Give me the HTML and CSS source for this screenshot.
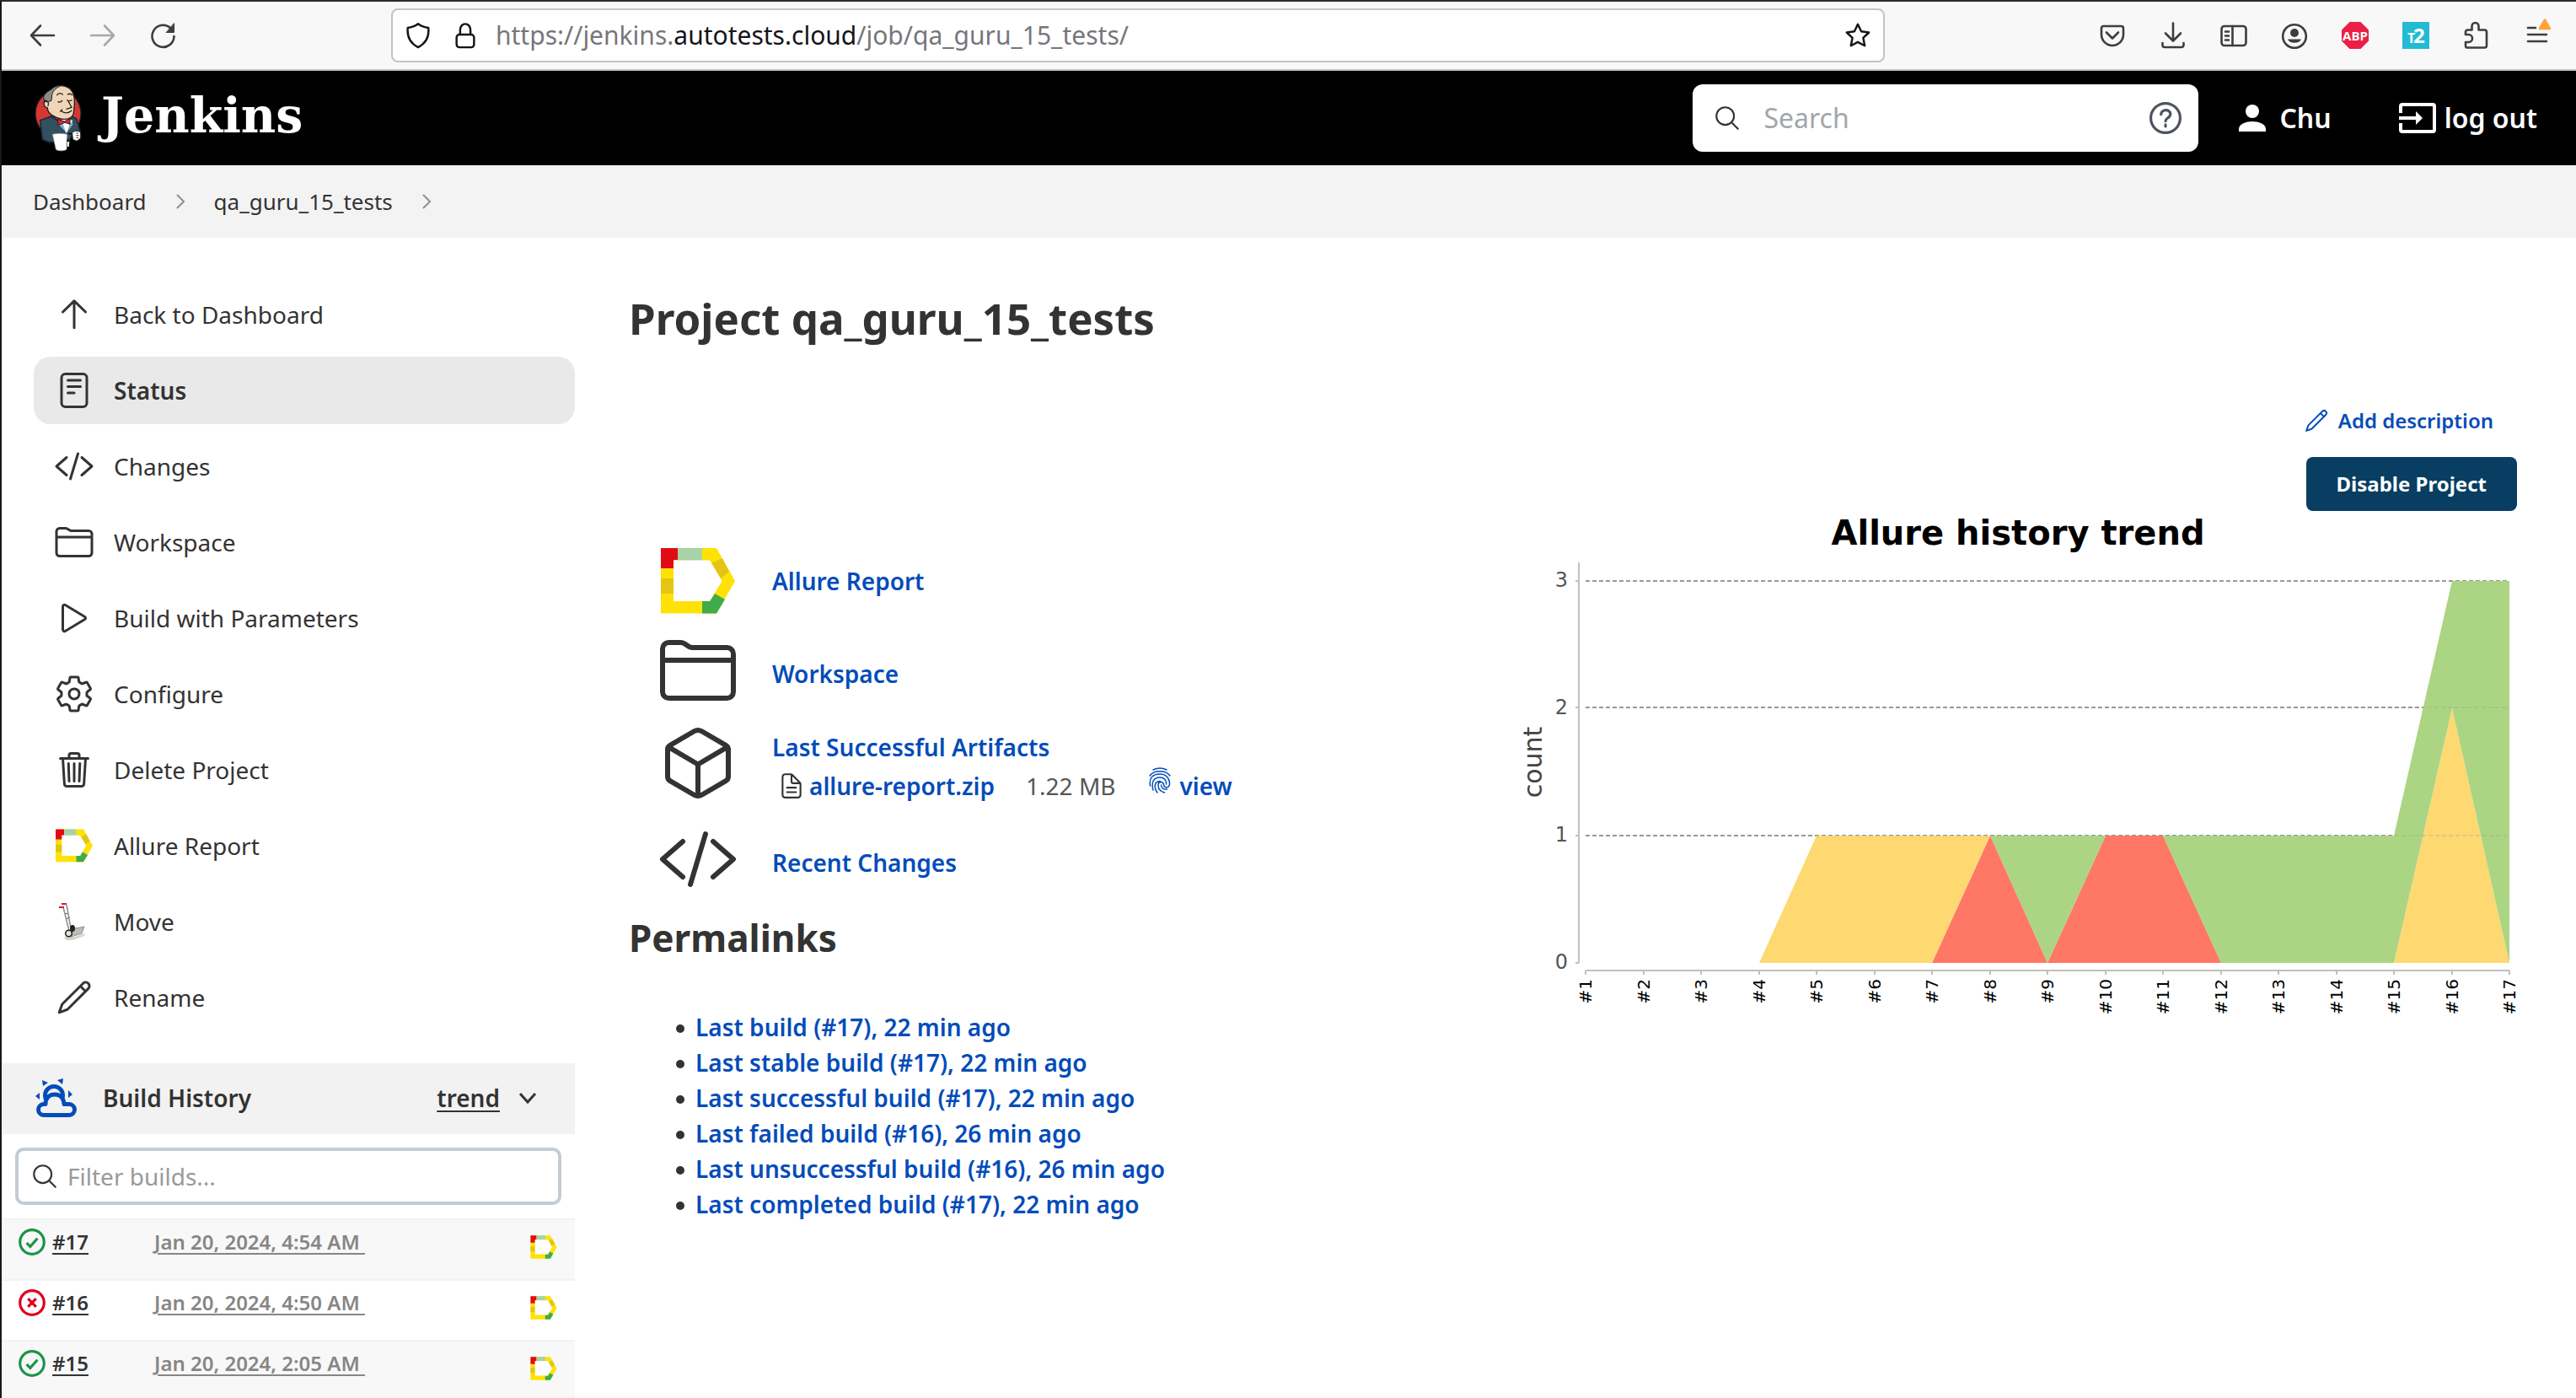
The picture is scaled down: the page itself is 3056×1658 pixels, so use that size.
FILE: index.html
```html
<!DOCTYPE html>
<html lang="en">
<head>
<meta charset="utf-8">
<title>qa_guru_15_tests [Jenkins]</title>
<link rel="stylesheet" href="styles.css">
</head>
<body>
<svg class="sprite" aria-hidden="true">
  <symbol id="i-up" viewBox="0 0 512 512"><path d="M112 224L256 84l144 140M256 90v334"/></symbol>
  <symbol id="i-status" viewBox="0 0 512 512"><rect x="96" y="48" width="320" height="416" rx="48"/><path d="M176 128h160M176 208h160M176 288h80"/></symbol>
  <symbol id="i-code" viewBox="0 0 512 512"><path d="M160 368L32 256l128-112M352 368l128-112-128-112M304 96l-96 320"/></symbol>
  <symbol id="i-folder" viewBox="0 0 512 512"><path d="M440 432H72a40 40 0 01-40-40V120a40 40 0 0140-40h75.89a40 40 0 0122.19 6.72l27.84 18.56a40 40 0 0022.19 6.72H440a40 40 0 0140 40v240a40 40 0 01-40 40zM32 192h448"/></symbol>
  <symbol id="i-play" viewBox="0 0 512 512"><path d="M112 111v290c0 17.44 17 28.52 31 20.16l247.9-148.37c12.12-7.25 12.12-26.33 0-33.58L143 90.84c-14-8.36-31 2.72-31 20.16z"/></symbol>
  <symbol id="i-gear" viewBox="0 0 512 512"><path d="M262.29 192.31a64 64 0 1057.4 57.4 64.13 64.13 0 00-57.4-57.4zM416.39 256a154.34 154.34 0 01-1.53 20.79l45.21 35.46a10.81 10.81 0 012.45 13.75l-42.77 74a10.81 10.81 0 01-13.14 4.59l-44.9-18.08a16.11 16.11 0 00-15.17 1.75A164.48 164.48 0 01325 400.8a15.94 15.94 0 00-8.82 12.14l-6.73 47.89a11.08 11.08 0 01-10.68 9.17h-85.54a11.11 11.11 0 01-10.69-8.87l-6.72-47.82a16.07 16.07 0 00-9-12.22 155.3 155.3 0 01-21.46-12.57 16 16 0 00-15.11-1.71l-44.89 18.07a10.81 10.81 0 01-13.14-4.58l-42.77-74a10.8 10.8 0 012.45-13.75l38.21-30a16.05 16.05 0 006-14.08c-.36-4.17-.58-8.33-.58-12.5s.21-8.27.58-12.35a16 16 0 00-6.07-13.94l-38.19-30A10.81 10.81 0 0149.48 186l42.77-74a10.81 10.81 0 0113.14-4.59l44.9 18.08a16.11 16.11 0 0015.17-1.75A164.48 164.48 0 01187 111.2a15.94 15.94 0 008.82-12.14l6.73-47.89A11.08 11.08 0 01213.23 42h85.54a11.11 11.11 0 0110.69 8.87l6.72 47.82a16.07 16.07 0 009 12.22 155.3 155.3 0 0121.46 12.57 16 16 0 0015.11 1.71l44.89-18.07a10.81 10.81 0 0113.14 4.58l42.77 74a10.8 10.8 0 01-2.45 13.75l-38.21 30a16.05 16.05 0 00-6.05 14.08c.33 4.14.55 8.3.55 12.47z"/></symbol>
  <symbol id="i-trash" viewBox="0 0 512 512"><path d="M112 112l20 320c.95 18.49 14.4 32 32 32h184c17.67 0 30.87-13.51 32-32l20-320M80 112h352M192 112V72a24 24 0 0124-24h80a24 24 0 0124 24v40M256 176v224M184 176l8 224M328 176l-8 224"/></symbol>
  <symbol id="i-pencil" viewBox="0 0 512 512"><path d="M66 446l38-104L372 74a47 47 0 0166 66L170 408zM334 112l66 66"/></symbol>
  <symbol id="i-cube" viewBox="0 0 512 512"><path d="M448 341.37V170.61A32 32 0 00432.11 143l-152-88.46a47.94 47.94 0 00-48.24 0L79.89 143A32 32 0 0064 170.61v170.76A32 32 0 0079.89 369l152 88.46a48 48 0 0048.24 0l152-88.46A32 32 0 00448 341.37zM69 153.99l187 110 187-110M256 463.99v-200"/></symbol>
  <symbol id="i-doc" viewBox="0 0 512 512"><path d="M416 221.25V416a48 48 0 01-48 48H144a48 48 0 01-48-48V96a48 48 0 0148-48h98.75a32 32 0 0122.62 9.37l141.26 141.26a32 32 0 019.37 22.62zM256 56v120a32 32 0 0032 32h120M176 288h160M176 368h160"/></symbol>
  <symbol id="i-search" viewBox="0 0 512 512"><path d="M221.09 64a157.09 157.09 0 10157.09 157.09A157.1 157.1 0 00221.09 64zM338.29 338.29L448 448"/></symbol>
  <symbol id="i-right" viewBox="0 0 12 20"><path d="M2 2l8 8-8 8"/></symbol>
  <symbol id="i-down" viewBox="0 0 24 16"><path d="M3 3l9 10 9-10"/></symbol>
  <symbol id="i-finger" viewBox="0 0 28 32"><path d="M6 3c5-2.500 11-2.500 16 0M2 10C7 3 21 3 26 10M2.500 22C1 13 5 8 14 8c8 0 12 6 11.500 12-.5 5-6.500 5-7 .5-.5-4-6.500-4-6.500.5 0 4.500 3 8 7.500 9M6 27C3.500 18 6.500 12 14 12c5.500 0 8 4 7.500 8M11 30C7 25 6.500 16.500 14.500 16.500M15.500 21c.5 4 3 5.500 7 5"/></symbol>
  <symbol id="i-ok" viewBox="0 0 30 30"><circle cx="15" cy="15" r="13.400"/><path class="bold" d="M9 16l4 4 8-9"/></symbol>
  <symbol id="i-fail" viewBox="0 0 30 30"><circle cx="15" cy="15" r="13.400"/><path class="bold" d="M10.500 10.500l9 9M19.500 10.500l-9 9"/></symbol>
  <symbol id="i-allure" viewBox="-4 -9 96 96">
    <path fill="#ffe106" d="M0 0h66l22 39-22 38.500H0z"/>
    <path fill="#e10b15" d="M0 0h20v14H0zM0 0h15v24H0z"/>
    <path fill="#a8d3a6" d="M20 0h29v15H20z"/>
    <path fill="#e3c513" d="M73 12l8 16-10 8-11-18zM0 36h15v18H0z"/>
    <path fill="#3fac49" d="M49 63h9l6-9 12 7-10 16.500H49z"/>
    <path fill="#fff" d="M15 14.500h43L72.500 39 58 63H15z"/>
  </symbol>
</svg>

<nav class="toolbar" aria-label="Browser">
  <button class="tool" aria-label="Back"><svg viewBox="0 0 32 32"><path d="M30 16H3M14 4.500L3 16l11 11.500"/></svg></button>
  <button class="tool tool-off" aria-label="Forward"><svg viewBox="0 0 32 32"><path d="M2 16h27M18 4.500L29 16 18 27.500"/></svg></button>
  <button class="tool" aria-label="Reload"><svg viewBox="0 0 32 32"><path d="M28.500 17A13 13 0 1 1 24 7"/><path class="solid" d="M28.500 2v10.500h-9z"/></svg></button>
  <div class="urlbar">
    <svg viewBox="0 0 32 34"><path d="M16 2.500c4 3 8 4.500 13 5 1 10-2 19-13 24.500C5 26.500 2 17.500 3 7.500c5-.5 9-2 13-5z"/></svg>
    <svg viewBox="0 0 32 34"><rect x="5" y="16" width="22" height="16" rx="3.500"/><path d="M9.500 16v-6a6.500 7.500 0 0 1 13 0v6"/></svg>
    <div class="url" role="textbox" aria-label="Address" contenteditable="true">https://jenkins.<span class="host">autotests.cloud</span>/job/qa_guru_15_tests/</div>
    <button class="tool" aria-label="Bookmark"><svg viewBox="0 0 34 34"><path d="M17 3l4.300 9 9.700 1.300-7.200 6.700L25.700 30 17 25.300 8.300 30l1.900-10L3 13.300 12.700 12z"/></svg></button>
  </div>
  <button class="tool" aria-label="Pocket"><svg viewBox="0 0 32 32"><path d="M5.500 5h21A2.500 2.500 0 0 1 29 7.500V15a13 13 0 0 1-26 0V7.500A2.500 2.500 0 0 1 5.500 5zM9 12.500l7 7 7-7"/></svg></button>
  <button class="tool" aria-label="Downloads"><svg viewBox="0 0 32 32"><path d="M16 1.500V22M7 13.500l9 9 9-9M3.500 25v2.500a2.500 2.500 0 0 0 2.500 2.500h20a2.500 2.500 0 0 0 2.500-2.500V25"/></svg></button>
  <button class="tool" aria-label="Sidebar"><svg viewBox="0 0 32 32"><rect x="1.500" y="5" width="29" height="23" rx="3.500"/><path d="M14.500 5v23M6 11.500h4M6 16.500h4M6 21.500h4"/></svg></button>
  <button class="tool" aria-label="Account"><svg viewBox="0 0 32 32"><circle cx="16" cy="17" r="13.800"/><circle class="fill" cx="16" cy="13" r="5"/><path class="fill" d="M8 20.500h16a8.500 6.500 0 0 1-16 0z"/></svg></button>
  <button class="tool" aria-label="Adblock Plus"><svg viewBox="0 0 32 32"><path fill="#ed1e45" stroke="none" d="M9.500 0h13L32 9.500v13L22.500 32h-13L0 22.500v-13z"/><text class="badge-text" x="16" y="22" text-anchor="middle">ABP</text></svg></button>
  <button class="tool" aria-label="T2"><svg viewBox="0 0 32 32"><path fill="#22bbd3" stroke="none" d="M0 0h32v32H0z"/><text class="badge-small" x="6" y="25">T</text><text class="badge-big" x="13" y="25">2</text></svg></button>
  <button class="tool" aria-label="Extensions"><svg viewBox="0 0 32 32"><path d="M4.500 30.500A2 2 0 0 1 3 28.500v-4.500h3.500a4.200 4.200 0 0 0 0-9H3v-3a2.500 2.500 0 0 1 2.500-2.500h5V5a4 4 0 0 1 8 0v4.500h7A2.500 2.500 0 0 1 28 12v16a2.500 2.500 0 0 1-2.500 2.500z"/></svg></button>
  <button class="tool" aria-label="Menu"><svg viewBox="0 0 32 32"><path d="M5 7h9M5 15h22M5 23h22"/><path fill="#ffa436" stroke="#ffa436" stroke-linejoin="round" d="M25 -2.500L31 8H19z"/></svg></button>
</nav>

<header class="header">
  <a class="brand" href="#">
    <svg class="logo" viewBox="30 28 172 240" aria-hidden="true">
      <ellipse cx="116" cy="132" rx="81" ry="84" fill="#d33833" stroke="#231f20" stroke-width="4"/>
      <path d="M52 156l40-14 30 20 36-24 24 14 12 44-30 14-8 18-72 6-24-10z" fill="#335061" stroke="#1d2a33" stroke-width="5"/>
      <path d="M116 160l30 42 22-44-22-10z" fill="#fff"/>
      <path d="M118 172l14-4 12 30zM170 168l-12-4-10 34z" fill="#81b0c4"/>
      <path d="M80 60c14-26 48-36 76-18 20 16 20 44 16 78 0 24-16 34-38 32-32-4-56-20-56-40-16-4-16-24-4-30z" fill="#f0d6b7" stroke="#231f20" stroke-width="4"/>
      <path d="M92 46c12-12 26-14 36-14-22 8-34 24-34 36l-2 18-10 4-18-8c-2-16 12-28 28-36z" fill="#8a8a8a" stroke="#231f20" stroke-width="3"/>
      <path d="M70 90c10-4 14 6 10 14M112 66c6-8 14-8 20-2M150 64c6-4 12-2 16 2M116 90q8 4 14-4M148 84q8 6 16 0M152 88l12 22-18 6M128 124c12 8 24 8 36-2M130 118l-6 6" fill="none" stroke="#231f20" stroke-width="4" stroke-linecap="round"/>
      <path d="M114 152l24 8 20-10v20l-18-6-24 10z" fill="#e5242b" stroke="#231f20" stroke-width="3"/>
      <path d="M96 206c16-4 34-4 52 0l-2 54c-12 6-28 6-38 0z" fill="#fff" stroke="#999" stroke-width="2"/>
      <path d="M150 204h18M150 222v26" stroke="#111" stroke-width="5"/><path d="M148 232h8l-2 18h-6z" fill="#fff"/>
      <path d="M166 200c8-8 24-8 30 0v20l-14 10-14-6z" fill="#fff" stroke="#231f20" stroke-width="3"/>
      <path d="M180 202h8M180 210h10M180 218h8" stroke="#444" stroke-width="3"/>
    </svg>
    <span class="wordmark">Jenkins</span>
  </a>
  <div class="search">
    <svg class="icon search-glyph"><use href="#i-search"/></svg>
    <input type="search" aria-label="Search" placeholder="Search">
    <a class="help" href="#" aria-label="Help"><svg viewBox="0 0 36 36"><circle cx="18" cy="18" r="16.500"/><path d="M13 14c0-6.500 10.500-6.500 10.500-.5 0 4.500-5.500 4.500-5.500 8"/><path d="M18 25.500v2"/></svg></a>
  </div>
  <a class="account" href="#"><svg class="person" viewBox="0 0 32 32"><circle cx="16" cy="8" r="8"/><path d="M0 32v-3c0-6 9-9 16-9s16 3 16 9v3z"/></svg>Chu</a>
  <a class="account logout" href="#"><svg class="exit" viewBox="0 0 44 36"><path d="M2 12V4q0-2 2-2h36q2 0 2 2v28q0 2-2 2H4q-2 0-2-2v-8"/><path d="M0 18h26"/><path d="M20 10l8 8-8 8z"/></svg>log out</a>
</header>

<nav class="crumbs" aria-label="Breadcrumb">
  <a href="#">Dashboard</a><svg><use href="#i-right"/></svg><a href="#">qa_guru_15_tests</a><svg><use href="#i-right"/></svg>
</nav>

<div class="page">
  <aside class="side">
    <nav class="tasks" aria-label="Project">
      <a class="task" href="#"><svg class="icon"><use href="#i-up"/></svg>Back to Dashboard</a>
      <a class="task task-active" href="#"><svg class="icon"><use href="#i-status"/></svg>Status</a>
      <a class="task" href="#"><svg class="icon"><use href="#i-code"/></svg>Changes</a>
      <a class="task" href="#"><svg class="icon"><use href="#i-folder"/></svg>Workspace</a>
      <a class="task" href="#"><svg class="icon"><use href="#i-play"/></svg>Build with Parameters</a>
      <a class="task" href="#"><svg class="icon"><use href="#i-gear"/></svg>Configure</a>
      <a class="task" href="#"><svg class="icon"><use href="#i-trash"/></svg>Delete Project</a>
      <a class="task" href="#"><svg class="allure"><use href="#i-allure"/></svg>Allure Report</a>
      <a class="task" href="#"><svg class="truck" viewBox="0 0 48 48"><path d="M12 42h12l13-4-1 3-14 5h-8z" fill="#d4d4d2"/><path d="M11 7l7 28M15 4l5 28M13 15l4-1M14 21l5-2" fill="none" stroke="#8d8d8b" stroke-width="1.500"/><path d="M6 7h6M9 3h6" stroke="#c8242a" stroke-width="2"/><path d="M20 33l16-3-3 8-13 4z" fill="#b9bdb6" stroke="#8d918a"/><ellipse cx="22" cy="32" rx="3" ry="4" fill="#222"/><circle cx="17.500" cy="38" r="3.800" fill="#e4e4e2" stroke="#222" stroke-width="1.600"/></svg>Move</a>
      <a class="task" href="#"><svg class="icon"><use href="#i-pencil"/></svg>Rename</a>
    </nav>
    <section class="history">
      <header class="history-head">
        <svg class="weather" viewBox="0 0 50 48"><circle cx="22" cy="21" r="10.500"/><path d="M10.500 44.500a6.500 6.500 0 0 1-1-13q1.500-.5 2.500 0c0-8 5-11.500 11-11.500s10.500 4 11 11.500h6a6.500 6.500 0 0 1 0 13z"/><path class="rays" d="M8 3l7 3-6 4zM33 1l-1 7-6-5zM0 22l5-4v8zM44 20l-5-5v9z"/></svg>
        <h2>Build History</h2>
        <a href="#">trend</a>
        <svg class="chevron"><use href="#i-down"/></svg>
      </header>
      <div class="filter">
        <svg class="icon filter-glyph"><use href="#i-search"/></svg>
        <input type="text" aria-label="Filter builds" placeholder="Filter builds...">
      </div>
      <table class="builds">
        <tr><td class="num"><svg class="ok"><use href="#i-ok"/></svg><a href="#">#17</a></td><td class="date"><a href="#">Jan 20, 2024, 4:54 AM&nbsp;</a></td><td class="report"><a href="#" aria-label="Allure Report"><svg><use href="#i-allure"/></svg></a></td></tr>
        <tr><td class="num"><svg class="fail"><use href="#i-fail"/></svg><a href="#">#16</a></td><td class="date"><a href="#">Jan 20, 2024, 4:50 AM&nbsp;</a></td><td class="report"><a href="#" aria-label="Allure Report"><svg><use href="#i-allure"/></svg></a></td></tr>
        <tr><td class="num"><svg class="ok"><use href="#i-ok"/></svg><a href="#">#15</a></td><td class="date"><a href="#">Jan 20, 2024, 2:05 AM&nbsp;</a></td><td class="report"><a href="#" aria-label="Allure Report"><svg><use href="#i-allure"/></svg></a></td></tr>
      </table>
    </section>
  </aside>

  <main class="main">
    <div class="left">
      <h1>Project qa_guru_15_tests</h1>
      <ul class="links">
        <li><svg class="allure"><use href="#i-allure"/></svg><a href="#">Allure Report</a></li>
        <li><svg class="icon"><use href="#i-folder"/></svg><a href="#">Workspace</a></li>
        <li><svg class="icon"><use href="#i-cube"/></svg>
          <div class="artifacts">
            <a href="#">Last Successful Artifacts</a>
            <div class="artifact">
              <svg class="icon doc"><use href="#i-doc"/></svg><a href="#">allure-report.zip</a>
              <span class="size">1.22 MB</span>
              <a class="view" href="#"><svg class="finger"><use href="#i-finger"/></svg>view</a>
            </div>
          </div>
        </li>
        <li><svg class="icon"><use href="#i-code"/></svg><a href="#">Recent Changes</a></li>
      </ul>
      <h2>Permalinks</h2>
      <ul class="permalinks">
        <li><a href="#">Last build (#17), 22 min ago</a></li>
        <li><a href="#">Last stable build (#17), 22 min ago</a></li>
        <li><a href="#">Last successful build (#17), 22 min ago</a></li>
        <li><a href="#">Last failed build (#16), 26 min ago</a></li>
        <li><a href="#">Last unsuccessful build (#16), 26 min ago</a></li>
        <li><a href="#">Last completed build (#17), 22 min ago</a></li>
      </ul>
    </div>
    <div class="right">
      <div class="actions">
        <a class="describe" href="#"><svg class="icon"><use href="#i-pencil"/></svg>Add description</a>
        <button class="disable">Disable Project</button>
      </div>
      <svg class="chart" viewBox="0 0 1200 610" role="img" aria-label="Allure history trend">
        <text class="chart-title" x="604" y="40" text-anchor="middle">Allure history trend</text>
        <path class="grid" d="M91 83h1096M91 233h1096M91 385h1096"/>
        <g class="area"></g>
        <g class="ticks"><path d="M83 61v475M79 83h4M79 233h4M79 385h4M79 536h4M91 545h1096"/></g>
      </svg>
    </div>
  </main>
</div>
<script src="chart.js"></script>
</body>
</html>
```

FILE: chart.js
```js
// Draws the stacked trend: failed, broken, passed per build.
(function () {
  var failed = [0,0,0,0,0,0,0,1,0,1,1,0,0,0,0,0,0];
  var broken = [0,0,0,0,1,1,1,0,0,0,0,0,0,0,0,2,0];
  var passed = [0,0,0,0,0,0,0,0,1,0,0,1,1,1,1,1,3];
  var ns = "http://www.w3.org/2000/svg";
  var x0 = 91, x1 = 1187, y0 = 536, unit = 151;
  var chart = document.querySelector(".chart");
  var area = chart.querySelector(".area");
  var ticks = chart.querySelector(".ticks");

  function add(parent, name, attrs, text) {
    var el = document.createElementNS(ns, name);
    for (var key in attrs) el.setAttribute(key, attrs[key]);
    if (text) el.textContent = text;
    parent.appendChild(el);
  }
  function x(i) { return Math.round(x0 + (x1 - x0) * i / 16); }

  var base = failed.map(function () { return 0; });
  [[failed, "#ff7865"], [broken, "#fed871"], [passed, "#abd583"]].forEach(function (series) {
    var top = base.map(function (b, i) { return b + series[0][i]; });
    var points = top.map(function (v, i) { return x(i) + "," + (y0 - v * unit); });
    for (var i = 16; i >= 0; i--) points.push(x(i) + "," + (y0 - base[i] * unit));
    add(area, "polygon", { points: points.join(" "), fill: series[1] });
    base = top;
  });
  // Gridlines stay faintly visible through the filled areas.
  add(area, "path", { "class": "grid grid-faint", d: "M1002 233h185M283 385h904" });

  for (var i = 0; i < 17; i++) {
    add(ticks, "path", { d: "M" + x(i) + " 545v5" });
    add(chart, "text", { "class": "build-label", "text-anchor": "end",
      transform: "translate(" + (x(i) + 7) + " 555) rotate(-90)" }, "#" + (i + 1));
  }
  for (var v = 0; v < 4; v++) {
    add(chart, "text", { "class": "count-label", "text-anchor": "end", x: 70, y: y0 - v * unit + 7 }, String(v));
  }
  add(chart, "text", { "class": "axis-label", "text-anchor": "middle", transform: "translate(39 298) rotate(-90)" }, "count");
})();
```

FILE: styles.css
```css
* { box-sizing: border-box; }

body {
  margin: 0;
  height: 100vh;
  overflow: hidden;
  border-top: 2px solid #2b2a2d;
  border-left: 2px solid #17191a;
  background: #fff;
  color: #333;
  font: 28px/42px "Noto Sans", sans-serif;
}

a { color: inherit; text-decoration: none; }
svg { display: block; flex: none; }
h1, h2, ul { margin: 0; padding: 0; }
ul { list-style: none; }
button { border: 0; padding: 0; background: none; font: inherit; cursor: pointer; }
input { border: 0; padding: 0; outline: 0; background: none; font: inherit; color: inherit; flex: 1; min-width: 0; }
input::placeholder { color: #999; opacity: 1; }
.sprite { position: absolute; width: 0; height: 0; }

.icon {
  width: 48px;
  height: 48px;
  fill: none;
  stroke: currentColor;
  stroke-width: 32;
  stroke-linecap: round;
  stroke-linejoin: round;
}

/* Browser toolbar */
.toolbar {
  display: flex;
  align-items: center;
  gap: 40px;
  height: 82px;
  padding: 0 30px 0 32px;
  background: #f8f8f8;
  border-bottom: 2px solid #c4c4c4;
}
.tool { flex: none; width: 32px; height: 32px; color: #3d3d3f; }
.tool-off { color: #a9a9ab; }
.tool svg, .urlbar > svg {
  width: 32px;
  height: 32px;
  overflow: visible;
  fill: none;
  stroke: currentColor;
  stroke-width: 2.600;
  stroke-linecap: round;
  stroke-linejoin: round;
}
.tool .fill { fill: currentColor; stroke: none; }
.tool .solid { fill: currentColor; stroke-width: 1; }
.tool text { stroke: none; fill: #fff; font-family: "Open Sans", sans-serif; font-weight: 700; }
.badge-text { font-size: 15px; }
.badge-small { font-size: 16px; }
.badge-big { font-size: 24px; }
.urlbar {
  flex: 1;
  display: flex;
  align-items: center;
  height: 64px;
  margin: 0 214px;
  padding: 0 14px;
  gap: 24px;
  border: 2px solid #c4c4c4;
  border-radius: 8px;
  background: #fff;
  color: #15141a;
}
.urlbar .tool { color: #15141a; }
.url { flex: 1; margin-left: -4px; color: #77767b; font-size: 30px; white-space: nowrap; }
.host { color: #15141a; }

/* Jenkins header */
.header {
  display: flex;
  align-items: center;
  height: 112px;
  padding: 0 46px 0 38px;
  background: #000;
  color: #fff;
}
.brand { display: flex; align-items: center; gap: 22px; margin-right: auto; }
.logo { width: 58px; height: 80px; }
.wordmark { font: bold 57px/72px "DejaVu Serif", serif; padding-bottom: 6px; }
.search {
  display: flex;
  align-items: center;
  width: 600px;
  height: 80px;
  padding: 0 20px 0 24px;
  border-radius: 12px;
  background: #fff;
  color: #333;
  font-size: 32px;
}
.search-glyph { width: 34px; height: 34px; margin-right: 26px; }
.search input::placeholder { color: #a3a6aa; }
.help svg { width: 38px; height: 38px; fill: none; stroke: #4d545d; stroke-width: 3; stroke-linecap: round; }
.account { display: flex; align-items: center; gap: 16px; margin-left: 48px; font-size: 32px; font-weight: 600; }
.person { width: 32px; height: 32px; fill: #fff; }
.logout { gap: 10px; margin-left: 80px; }
.exit { width: 44px; height: 36px; fill: none; stroke: #fff; stroke-width: 4; }
.exit path:last-child { fill: #fff; stroke: none; }

.crumbs {
  display: flex;
  align-items: center;
  height: 86px;
  padding: 0 37px;
  background: #f3f3f3;
  font-size: 26px;
}
.crumbs svg { width: 12px; height: 20px; margin: 0 34px; fill: none; stroke: #8f8f8f; stroke-width: 2; }

.page { display: flex; align-items: flex-start; }

/* Side panel */
.side { flex: none; width: 680px; }
.tasks { display: flex; flex-direction: column; gap: 10px; padding: 51px 0 38px 38px; }
.task {
  display: flex;
  align-items: center;
  gap: 23px;
  height: 80px;
  padding: 0 24px;
  border-radius: 20px;
}
.task-active { background: #e9e9e9; font-weight: 600; }
.allure, .truck { width: 48px; height: 48px; }
.history-head {
  display: flex;
  align-items: center;
  height: 84px;
  padding: 0 44px 2px 40px;
  background: #f2f2f2;
  font-weight: 600;
}
.weather { width: 50px; height: 48px; fill: #f2f2f2; stroke: #034cb9; stroke-width: 5; stroke-linejoin: round; }
.weather .rays { fill: #034cb9; stroke: none; }
.history-head h2 { flex: 1; margin-left: 30px; font-size: 28px; font-weight: 600; }
.history-head a { text-decoration: underline; text-decoration-thickness: 2px; text-underline-offset: 4px; }
.chevron { width: 24px; height: 16px; margin-left: 21px; fill: none; stroke: #333; stroke-width: 3; }
.filter {
  display: flex;
  align-items: center;
  gap: 10px;
  height: 68px;
  margin: 16px;
  padding: 0 14px;
  border: 4px solid #c3ccd3;
  border-radius: 10px;
}
.filter-glyph { width: 34px; height: 34px; }
.builds { width: 100%; border-spacing: 0; font-size: 24px; font-weight: 600; line-height: 32px; }
.builds tr:nth-child(odd) { background: #f8f8f8; }
.builds td { height: 72px; padding: 10px 0 0; border-top: 2px solid #f2f2f2; vertical-align: top; }
.builds a { display: inline-block; text-decoration: underline; text-decoration-thickness: 2px; text-underline-offset: 4px; }
.builds .num { width: 181px; padding-left: 20px; }
.num svg { float: left; width: 32px; height: 32px; margin-right: 8px; fill: none; stroke: currentColor; stroke-width: 3; }
.num .bold { stroke-width: 4; }
.num .ok { color: #1e9348; }
.num .fail { color: #e1001f; }
.builds .date { color: #868686; }
.builds .report { width: 54px; }
.report svg { width: 34px; height: 34px; margin-top: 5px; }

/* Project page */
.main { flex: 1; display: flex; justify-content: space-between; padding: 62px 66px 0 64px; }
h1 { font-size: 51px; line-height: 66px; }
.left a, .describe { color: #034cb9; font-weight: 600; }
.links { padding: 224px 0 0 34px; }
.links > li { display: flex; align-items: center; gap: 40px; min-height: 110px; }
.links > li:last-child { min-height: 118px; }
.links > li > svg { width: 96px; height: 96px; }
.links > li > .icon { margin-bottom: 8px; }
.artifacts { line-height: 46px; }
.artifact { display: flex; align-items: center; padding-left: 6px; }
.artifact .doc { width: 34px; height: 34px; margin-right: 4px; color: #333; }
.artifact .size { margin: 0 38px 0 37px; color: #555; }
.view { display: flex; }
.finger { width: 28px; height: 34px; margin-right: 10px; fill: none; stroke: #034cb9; stroke-width: 1.500; stroke-linecap: round; }
.left h2 { font-size: 44px; line-height: 60px; }
.permalinks { padding: 55px 0 0 56px; }
.permalinks li { display: flex; align-items: center; gap: 13px; }
.permalinks li::before { content: ""; width: 10px; height: 10px; margin-top: 4px; border-radius: 50%; background: #333; }

.right { flex: 0 1 1200px; padding-top: 134px; }
.actions { display: flex; flex-direction: column; align-items: flex-end; gap: 22px; padding-right: 4px; font-size: 24px; }
.describe { display: flex; align-items: center; gap: 10px; margin-right: 28px; }
.describe .icon { width: 32px; height: 32px; }
.disable {
  height: 64px;
  padding: 0 36px;
  border-radius: 8px;
  background: #073e61;
  color: #fff;
  font-weight: 700;
}
.chart { width: 100%; height: auto; font-family: "DejaVu Sans", sans-serif; fill: #555; }
.chart-title { font-size: 40px; font-weight: 700; fill: #000; }
.grid { fill: none; stroke: #999; stroke-width: 2; stroke-dasharray: 5 3; }
.grid-faint { stroke-opacity: 0.250; }
.ticks { fill: none; stroke: #c0c0c0; stroke-width: 2; }
.count-label { font-size: 24px; }
.axis-label { font-size: 30px; fill: #444; }
.build-label { font-size: 20px; fill: #000; }
```
